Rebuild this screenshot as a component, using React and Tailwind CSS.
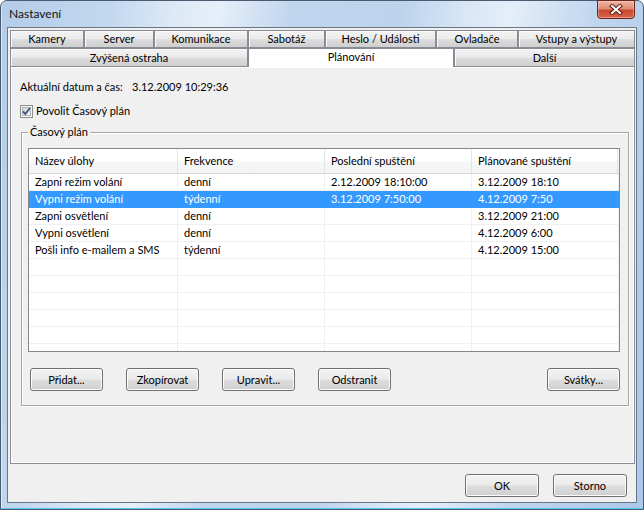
import React from "react";

function CloseButton() {
  return (
    <div className="mr-[8px] w-[38px] h-[19px] -mt-px rounded-b-[4px] border border-[#6b2418] bg-[linear-gradient(#eeb3a4_0%,#df8c77_45%,#c9472c_55%,#d86449_100%)] shadow-[inset_0_0_0_1px_rgba(255,220,210,0.45)] flex items-center justify-center">
      <svg width="14" height="11" viewBox="0 0 14 11">
        <path d="M3 2 L11 9 M11 2 L3 9" stroke="#5a1b10" strokeWidth="4" strokeLinecap="square" />
        <path d="M3 2 L11 9 M11 2 L3 9" stroke="#ffffff" strokeWidth="2" strokeLinecap="square" />
      </svg>
    </div>
  );
}

const tabBg =
  "bg-[linear-gradient(#f3f3f3_0%,#ebebeb_48%,#dddddd_52%,#cfcfcf_100%)]";

function Btn({ children, className }) {
  return (
    <div
      className={
        "h-[23px] border border-[#707070] rounded-[3px] bg-[linear-gradient(#f2f2f2_0%,#ebebeb_48%,#dddddd_52%,#cfcfcf_100%)] shadow-[inset_0_0_0_1px_#fcfcfc] flex items-center justify-center leading-4 " +
        className
      }
    >
      {children}
    </div>
  );
}

const rows = [
  ["Zapni režim volání", "denní", "2.12.2009 18:10:00", "3.12.2009 18:10"],
  ["Vypni režim volání", "týdenní", "3.12.2009 7:50:00", "4.12.2009 7:50"],
  ["Zapni osvětlení", "denní", "", "3.12.2009 21:00"],
  ["Vypni osvětlení", "denní", "", "4.12.2009 6:00"],
  ["Pošli info e-mailem a SMS", "týdenní", "", "4.12.2009 15:00"],
  ["", "", "", ""],
  ["", "", "", ""],
  ["", "", "", ""],
  ["", "", "", ""],
  ["", "", "", ""],
  ["", "", "", ""],
];

export default function App() {
  return (
    <div className="w-[644px] h-[510px] overflow-hidden bg-white font-['Lato',sans-serif] text-[11px] text-black">
      <div className="w-[644px] h-[510px] flex flex-col border border-[#4a5a70] rounded-t-[7px] bg-[linear-gradient(100deg,#b3cce8_0%,#c2d8ef_15%,#dde9f6_24%,#e6eff9_30%,#c0d6ee_40%,#bcd3ec_55%,#d9e7f6_64%,#e4eef9_70%,#bfd5ee_82%,#aac8ea_100%)] shadow-[inset_0_-1px_0_#5fc6f2,inset_1px_0_0_rgba(255,255,255,0.5)]">
        {/* title bar */}
        <div className="h-[26px] flex items-start justify-between">
          <div className="pl-[8px] pt-[5px] leading-4 text-[12px] text-[#111]">Nastavení</div>
          <CloseButton />
        </div>

        {/* client */}
        <div className="mx-[6px] h-[476px] border border-[#6b7583] bg-[#f0f0f0] flex flex-col pt-[2px] pl-[2px]">
          {/* tab row 1 */}
          <div className="flex h-[18px]">
            {[
              ["Kamery", "w-[74px]"],
              ["Server", "w-[70px]"],
              ["Komunikace", "w-[94px]"],
              ["Sabotáž", "w-[77px]"],
              ["Heslo / Události", "w-[111px]"],
              ["Ovladače", "w-[82px]"],
              ["Vstupy a výstupy", "w-[117px]"],
            ].map(([t, w]) => (
              <div
                key={t}
                className={
                  "h-[18px] border border-[#898c95] shadow-[inset_1px_1px_0_#fafafa] flex items-center justify-center leading-4 " +
                  tabBg +
                  " " +
                  w
                }
              >
                {t}
              </div>
            ))}
          </div>
          {/* tab row 2 */}
          <div className="flex h-[18px]">
            <div
              className={
                "w-[238px] h-[18px] border-t border-l border-r border-[#898c95] shadow-[inset_1px_1px_0_#fafafa] flex items-center justify-center leading-4 pt-[1px] " +
                tabBg
              }
            >
              Zvýšená ostraha
            </div>
            <div className="w-[206px] h-[19px] -mb-px relative z-10 bg-[#ffffff] border-t border-l border-r border-[#898c95] flex justify-center leading-4">
              Plánování
            </div>
            <div
              className={
                "w-[181px] h-[18px] border-t border-l border-r border-[#898c95] shadow-[inset_1px_1px_0_#fafafa] flex items-center justify-center leading-4 pt-[1px] " +
                tabBg
              }
            >
              Další
            </div>
          </div>

          {/* tab panel */}
          <div className="w-[625px] h-[398px] border border-[#898c95] bg-[#f0f0f0] shadow-[inset_1px_1px_0_#ffffff,inset_-1px_-1px_0_#ffffff] flex flex-col">
            <div className="mt-[12px] pl-[9px] flex leading-4 whitespace-nowrap">
              <span className="w-[112px]">Aktuální datum a čas:</span>
              <span>3.12.2009 10:29:36</span>
            </div>

            <div className="mt-[8px] pl-[9px] flex items-center leading-4 h-[16px]">
              <svg width="13" height="13" viewBox="0 0 13 13" className="shrink-0">
                <defs>
                  <linearGradient id="cbg" x1="0" y1="0" x2="1" y2="1">
                    <stop offset="0" stopColor="#cfcfcf" />
                    <stop offset="1" stopColor="#fbfbfb" />
                  </linearGradient>
                </defs>
                <rect x="0.5" y="0.5" width="12" height="12" fill="#f4f4f4" stroke="#8e8f8f" />
                <rect x="2.5" y="2.5" width="8" height="8" fill="url(#cbg)" stroke="#b6b6b6" />
                <path d="M3 6.3 L5.3 9 L10 3" stroke="#3b5289" strokeWidth="1.9" fill="none" strokeLinejoin="round" />
              </svg>
              <span className="ml-[3px]">Povolit Časový plán</span>
            </div>

            {/* group box */}
            <div className="mt-[13px] ml-[10px] w-[608px] h-[274px] relative border border-[#a5a5a5] shadow-[inset_1px_1px_0_#ffffff,1px_1px_0_#ffffff] pl-[6px] pt-[15px] flex flex-col">
              <span className="absolute left-[6px] -top-[9px] px-[2px] bg-[#f0f0f0] leading-4">
                Časový plán
              </span>

              {/* list view */}
              <div className="w-[592px] h-[204px] border border-[#828790] bg-white overflow-hidden flex flex-col">
                <div className="grid grid-cols-[149px_147px_147px_146px] h-[25px] shrink-0 border-b border-[#d5d5d5] bg-[linear-gradient(#ffffff_0%,#ffffff_45%,#f6f7f8_55%,#f1f2f4_100%)]">
                  {["Název úlohy", "Frekvence", "Poslední spuštění", "Plánované spuštění"].map((h) => (
                    <div key={h} className="border-r border-[#e3e4e6] pl-[6px] flex items-center leading-4">
                      {h}
                    </div>
                  ))}
                </div>
                {rows.map((r, i) => {
                  const sel = i === 1;
                  return (
                    <div
                      key={i}
                      className={
                        "grid grid-cols-[149px_147px_147px_147px] h-[17px] shrink-0 " +
                        (sel ? "bg-[#3399ff] text-white" : "")
                      }
                    >
                      {r.map((c, j) => (
                        <div
                          key={j}
                          className={
                            "border-r border-b pl-[6px] flex items-center leading-4 whitespace-nowrap " +
                            (sel ? "border-[#3399ff]" : "border-[#f0f0f0]")
                          }
                        >
                          {c}
                        </div>
                      ))}
                    </div>
                  );
                })}
              </div>

              {/* buttons */}
              <div className="mt-[16px] pl-[2px] w-[592px] flex gap-[23px]">
                <Btn className="w-[73px]">Přidat...</Btn>
                <Btn className="w-[73px]">Zkopírovat</Btn>
                <Btn className="w-[73px]">Upravit...</Btn>
                <Btn className="w-[73px]">Odstranit</Btn>
                <Btn className="w-[73px] ml-auto">Svátky...</Btn>
              </div>
            </div>
          </div>

          {/* dialog buttons */}
          <div className="flex justify-end gap-[14px] pr-[9px] pt-[10px]">
            <Btn className="w-[74px]">OK</Btn>
            <Btn className="w-[74px]">Storno</Btn>
          </div>
        </div>
      </div>
    </div>
  );
}
